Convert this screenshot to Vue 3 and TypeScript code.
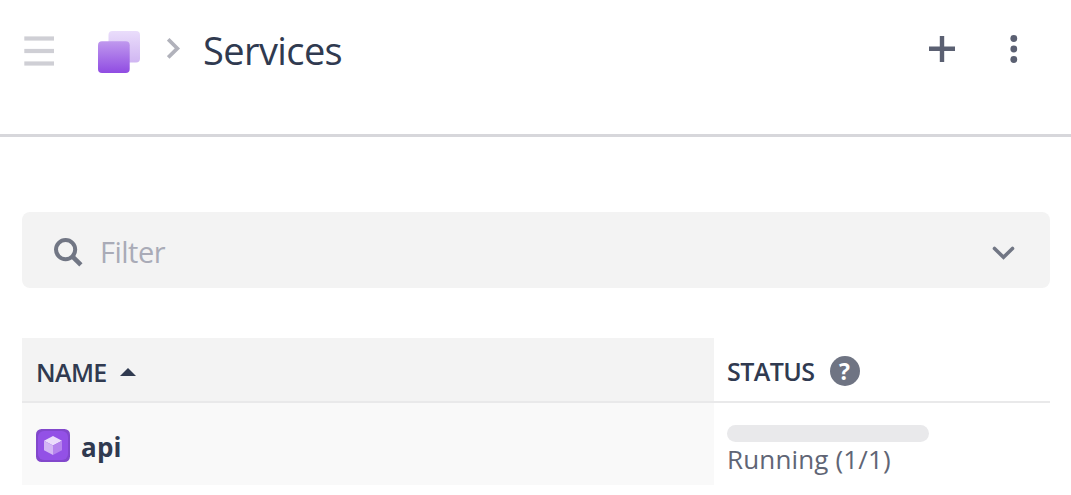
<script setup lang="ts">
interface Service {
  name: string
  status: string
}

const services: Service[] = [{ name: 'api', status: 'Running (1/1)' }]
</script>

<template>
  <div class="page">
    <header class="header">
      <svg class="menu" width="32" height="32" viewBox="0 0 32 32" fill="#cfcfd5">
        <rect x="0.3" y="0.4" width="29.7" height="4.2" />
        <rect x="0.3" y="12.9" width="29.7" height="4.2" />
        <rect x="0.3" y="25.4" width="29.7" height="4.2" />
      </svg>
      <svg class="logo" width="42" height="42" viewBox="0 0 42 42">
        <defs>
          <linearGradient id="back" x1="0" y1="0" x2="0" y2="1">
            <stop offset="0" stop-color="#eaddfb" />
            <stop offset="1" stop-color="#d0b6f2" />
          </linearGradient>
          <linearGradient id="front" x1="0" y1="0" x2="0" y2="1">
            <stop offset="0" stop-color="#bf98ee" />
            <stop offset="1" stop-color="#904ce2" />
          </linearGradient>
        </defs>
        <rect x="10.5" y="0" width="31.5" height="31.5" rx="4" fill="url(#back)" />
        <rect x="0" y="10.3" width="31.7" height="31.7" rx="4" fill="url(#front)" />
      </svg>
      <svg class="crumb" width="14" height="22" viewBox="0 0 14 22">
        <path d="M1.2 1.3 10.4 10.4 1.2 19.5" fill="none" stroke="#b1b2bb" stroke-width="3.7" />
      </svg>
      <h1 class="title">Services</h1>
      <svg class="plus" width="26" height="26" viewBox="0 0 26 26">
        <path d="M0 12.8H26M13 0V26" stroke="#5b6072" stroke-width="4.4" />
      </svg>
      <svg class="dots" width="8" height="28" viewBox="0 0 8 28" fill="#5b6072">
        <circle cx="3.8" cy="3.5" r="3.4" />
        <circle cx="3.8" cy="14" r="3.4" />
        <circle cx="3.8" cy="24.5" r="3.4" />
      </svg>
    </header>

    <main class="content">
      <div class="filter">
        <svg class="search" width="30" height="30" viewBox="0 0 30 30" fill="none" stroke="#717684">
          <circle cx="11.6" cy="11.6" r="9.6" stroke-width="4" />
          <path d="M18.3 18.3 26.9 26.9" stroke-width="4.6" />
        </svg>
        <span class="placeholder">Filter</span>
        <svg class="expand" width="24" height="16" viewBox="0 0 24 16">
          <path d="M2.5 3.5 11.5 12.2 20.5 3.5" fill="none" stroke="#717684" stroke-width="3.6" stroke-linecap="round" />
        </svg>
      </div>

      <div class="table">
        <div class="row head">
          <div class="cell name-cell">
            <span class="name-label">NAME</span>
            <svg class="sort" width="16" height="8" viewBox="0 0 16 8">
              <path d="M0 8 8 0 16 8Z" fill="#303a50" />
            </svg>
          </div>
          <div class="cell status-cell">
            <span class="status-label">STATUS</span>
            <span class="help">?</span>
          </div>
        </div>
        <div v-for="service in services" :key="service.name" class="row body">
          <div class="cell name-cell">
            <svg class="service-icon" width="34" height="33" viewBox="0 0 34 33">
              <rect width="34" height="33" rx="5.5" fill="#8248cc" />
              <rect x="2" y="2" width="30" height="29" rx="6" fill="#9351e6" />
              <path d="M17 7 26 11.8 17 16.5 8 11.8Z" fill="#ebdcfb" />
              <path d="M8 11.8 17 16.5V26L8 21.3Z" fill="#d3b6f4" />
              <path d="M26 11.8 17 16.5V26L26 21.3Z" fill="#b684ed" />
            </svg>
            <span class="service-name">{{ service.name }}</span>
          </div>
          <div class="cell status-cell stacked">
            <div class="bar"></div>
            <span class="status">{{ service.status }}</span>
          </div>
        </div>
      </div>
    </main>
  </div>
</template>

<style>
body {
  margin: 0;
  background: #fff;
}
</style>

<style scoped>
.page {
  width: 1071px;
  height: 495px;
  overflow: hidden;
  box-sizing: border-box;
  background: #fff;
  color: #303a50;
  font-family: "Open Sans", "Noto Sans", sans-serif;
}
svg {
  display: block;
  flex: none;
}
span,
.title {
  white-space: nowrap;
}
.header {
  display: flex;
  align-items: flex-start;
  box-sizing: border-box;
  height: 137px;
  padding: 31px 53px 0 24px;
  border-bottom: 3px solid #d7d7db;
}
.menu {
  margin-top: 5px;
}
.logo {
  margin-left: 42px;
}
.crumb {
  margin: 7px 0 0 27px;
}
.title {
  margin: -7px 0 0 22px;
  font-size: 38px;
  line-height: 52px;
  font-weight: 400;
  letter-spacing: -0.6px;
}
.plus {
  margin: 5px 0 0 auto;
}
.dots {
  margin: 4px 0 0 55px;
}
.content {
  padding: 75px 21px 0 22px;
}
.filter {
  display: flex;
  align-items: center;
  box-sizing: border-box;
  height: 76px;
  padding: 4px 34px 0 32px;
  border-radius: 8px;
  background: #f3f3f3;
}
.search {
  margin-top: 2px;
}
.placeholder {
  margin-left: 16px;
  font-size: 29px;
  line-height: 40px;
  letter-spacing: -0.5px;
  color: #a9abb7;
}
.expand {
  margin: 2px 0 0 auto;
}
.table {
  margin-top: 50px;
}
.row {
  display: grid;
  grid-template-columns: 692px 1fr;
}
.head {
  height: 63px;
  border-bottom: 2px solid #e9e9ea;
  font-weight: 600;
}
.body {
  height: 82px;
}
.cell {
  display: flex;
  align-items: center;
}
.head .name-cell {
  padding: 4px 0 0 14px;
  background: #f3f3f3;
}
.body .name-cell {
  padding: 0 0 0 14px;
  background: #f9f9f9;
}
.name-label,
.status-label {
  font-size: 25px;
  line-height: 34px;
}
.name-label {
  letter-spacing: -0.6px;
}
.status-label {
  letter-spacing: -0.55px;
}
.sort {
  margin-left: 13px;
}
.status-cell {
  padding: 3px 0 0 13px;
}
.help {
  display: grid;
  place-items: center;
  width: 30px;
  height: 30px;
  margin-left: 15px;
  border-radius: 50%;
  background: #6f7483;
  color: #fff;
  font-size: 23px;
  line-height: 30px;
  font-weight: 700;
}
.service-icon {
  margin-top: 2px;
}
.service-name {
  margin: 5px 0 0 11px;
  font-size: 26px;
  line-height: 36px;
  font-weight: 700;
  letter-spacing: 0.2px;
}
.stacked {
  flex-direction: column;
  align-items: flex-start;
  justify-content: flex-start;
  box-sizing: border-box;
  padding-top: 22px;
}
.bar {
  flex: none;
  width: 202px;
  height: 17px;
  border-radius: 9px;
  background: #e9e9eb;
}
.status {
  margin-top: -1px;
  font-size: 26px;
  line-height: 36px;
  letter-spacing: 0.15px;
  color: #606575;
}
</style>
